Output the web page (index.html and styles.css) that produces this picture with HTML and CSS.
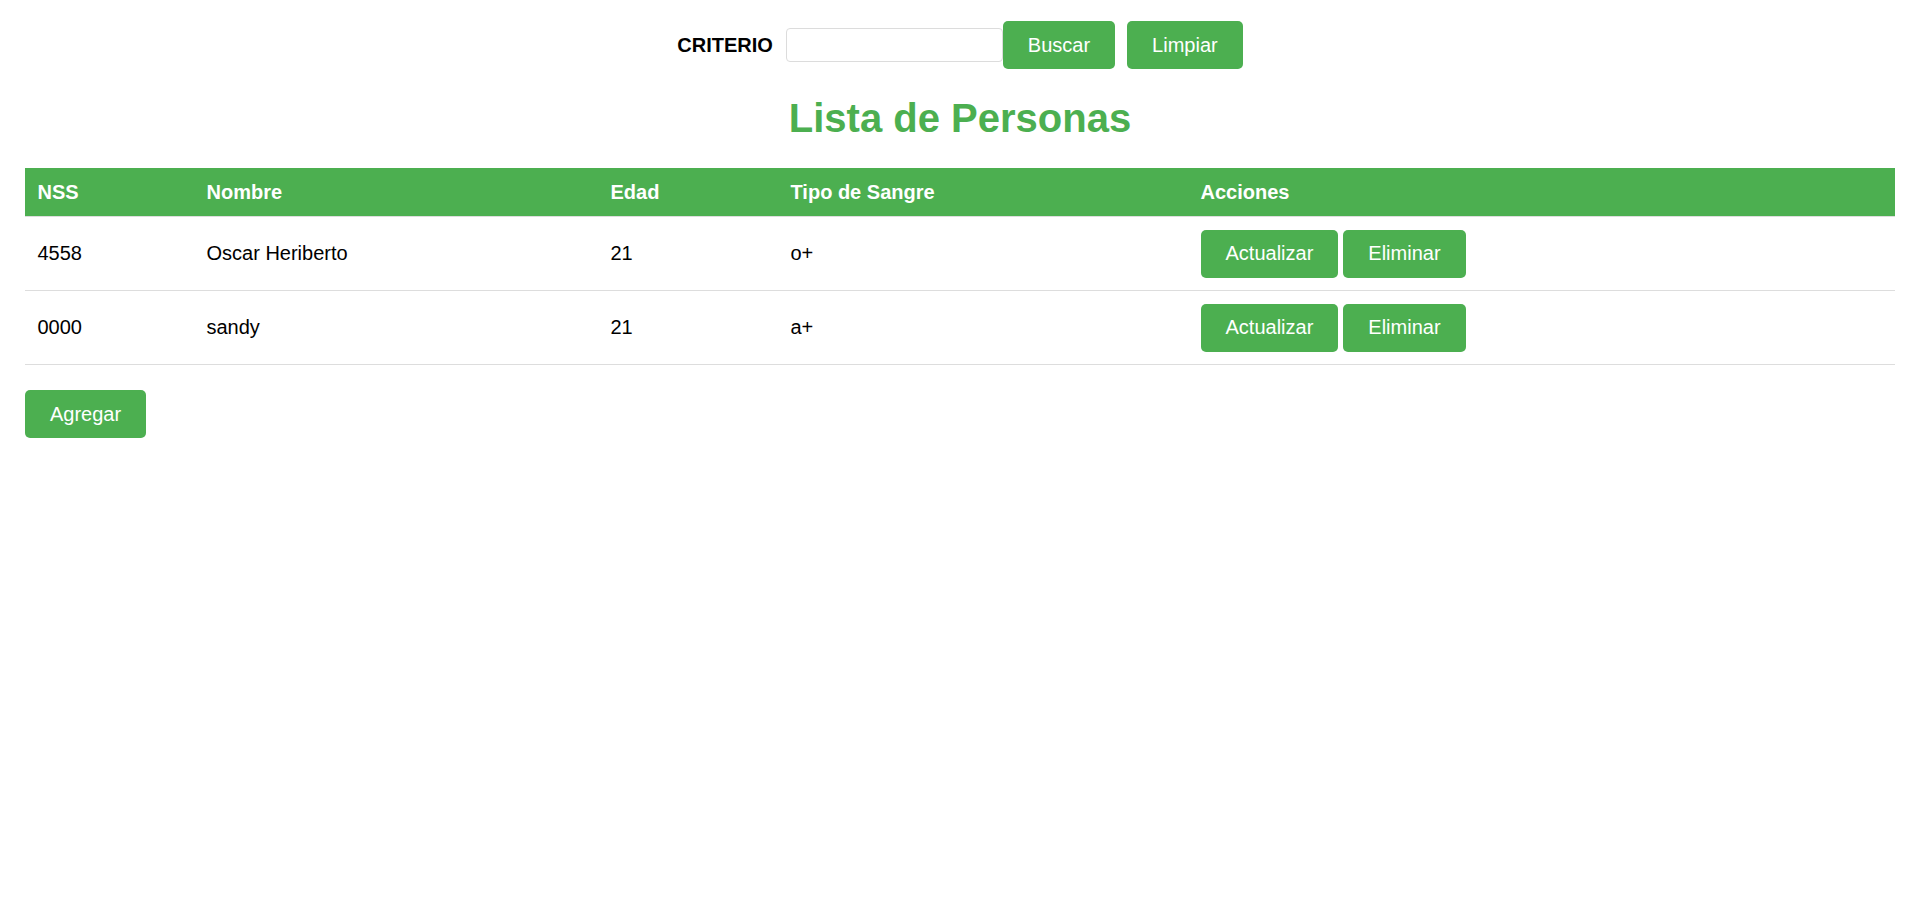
FILE: index.html
```html
<!DOCTYPE html>
<html lang="es">
<head>
<meta charset="utf-8">
<title>Lista de Personas</title>
<link rel="stylesheet" href="styles.css">
</head>
<body>
<div class="page">
  <form class="search">
    <label class="search-label" for="criterio">CRITERIO</label>
    <input class="search-input" id="criterio" type="text">
    <button type="button" class="btn">Buscar</button>
    <button type="button" class="btn btn-gap">Limpiar</button>
  </form>
  <h1 class="title">Lista de Personas</h1>
  <table class="people">
    <colgroup>
      <col class="c-nss"><col class="c-nombre"><col class="c-edad"><col class="c-tipo"><col>
    </colgroup>
    <thead>
      <tr><th>NSS</th><th>Nombre</th><th>Edad</th><th>Tipo de Sangre</th><th>Acciones</th></tr>
    </thead>
    <tbody>
      <tr>
        <td>4558</td><td>Oscar Heriberto</td><td>21</td><td>o+</td>
        <td class="actions"><button class="btn">Actualizar</button><button class="btn">Eliminar</button></td>
      </tr>
      <tr>
        <td>0000</td><td>sandy</td><td>21</td><td>a+</td>
        <td class="actions"><button class="btn">Actualizar</button><button class="btn">Eliminar</button></td>
      </tr>
    </tbody>
  </table>
  <button class="btn add">Agregar</button>
</div>
</body>
</html>
```

FILE: styles.css
```css
html, body {
  margin: 0;
  padding: 0;
  background: #fff;
}
body {
  font-family: "Liberation Sans", Arial, sans-serif;
  font-size: 20px;
  color: #000;
}
.page {
  margin: 0 16px 0 25px;
  padding-top: 21px;
}
.search {
  display: flex;
  justify-content: center;
  align-items: center;
  margin: 0;
}
.search-label {
  font-weight: bold;
  margin-right: 13px;
}
.search-input {
  box-sizing: border-box;
  width: 217px;
  height: 34px;
  border: 1px solid #dcdcdc;
  border-radius: 4px;
  padding: 2px 4px;
  font-family: inherit;
  font-size: 16px;
}
.btn {
  font-family: inherit;
  font-size: 20px;
  line-height: 23px;
  color: #fff;
  background: #4caf50;
  border: none;
  border-radius: 5px;
  padding: 12.5px 25px;
  cursor: pointer;
}
.btn-gap {
  margin-left: 12px;
}
.title {
  color: #4caf50;
  font-size: 40px;
  line-height: 46px;
  text-align: center;
  margin: 26px 0 27px;
}
.people {
  width: 100%;
  border-collapse: collapse;
  table-layout: fixed;
}
.c-nss { width: 169px; }
.c-nombre { width: 404px; }
.c-edad { width: 180px; }
.c-tipo { width: 410px; }
.people th {
  background: #4caf50;
  color: #fff;
  font-weight: bold;
  text-align: left;
  padding: 12.5px;
  line-height: 23px;
  border-bottom: 1px solid #ddd;
}
.people td {
  padding: 12.5px;
  line-height: 23px;
  border-bottom: 1px solid #ddd;
  text-align: left;
}
.actions .btn {
  margin-right: 5px;
}
.add {
  margin-top: 25px;
}
```
